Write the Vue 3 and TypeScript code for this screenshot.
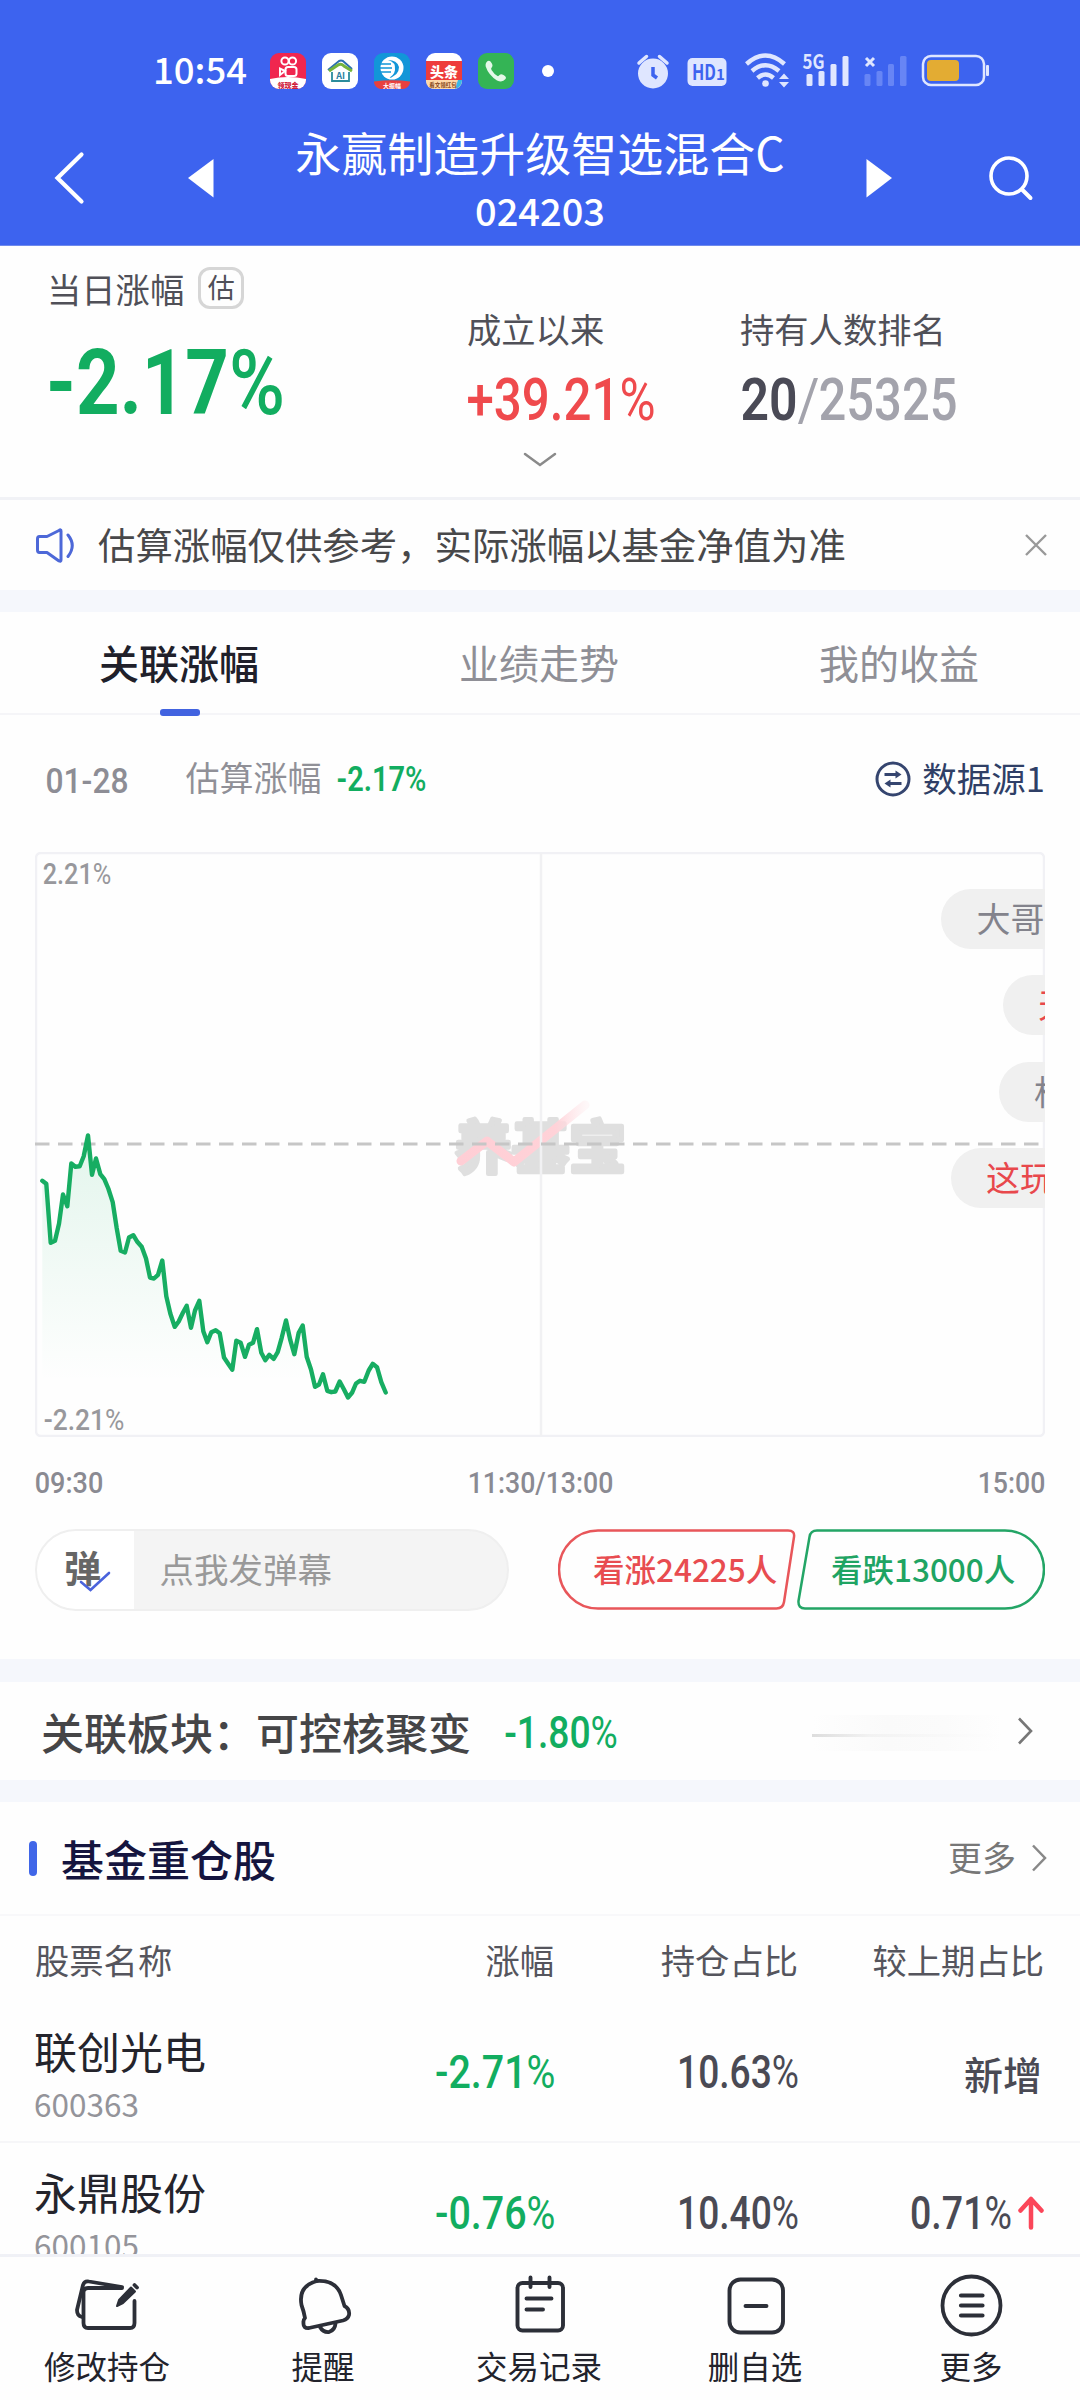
<script setup lang="ts">
import { h } from 'vue'

interface NumProps {
  text: string
  w: number
  cap: number
  weight?: number
}

// Condensed numeral: digits are fitted to a fixed width, the percent sign is lighter
const Num = (props: NumProps) => {
  const pad = props.cap * 0.06
  const weight = props.weight ?? 500
  const body = props.text.replace('%', '')
  const children = [h('tspan', body)]
  if (body !== props.text) {
    children.push(h('tspan', { 'font-weight': weight > 500 ? 500 : 400 }, '%'))
  }
  return h('svg', { class: 'num', width: props.w, height: props.cap }, [
    h(
      'text',
      {
        x: -pad,
        y: props.cap,
        'font-size': props.cap / 0.711,
        'font-weight': weight,
        textLength: props.w + pad * 2,
        lengthAdjust: 'spacingAndGlyphs',
      },
      children,
    ),
  ])
}
Num.props = ['text', 'w', 'cap', 'weight']

const series: [number, number][] = [
  [127, 304], [139, 313], [152, 490], [165, 484], [177, 433], [189, 345], [202, 380], [214, 252],
  [226, 262], [239, 260], [251, 230], [264, 168], [276, 286], [288, 237], [301, 284], [313, 299],
  [325, 327], [338, 368], [350, 446], [362, 514], [375, 519], [387, 474], [400, 467], [412, 487],
  [425, 502], [438, 537], [450, 594], [462, 597], [474, 586], [487, 543], [499, 650], [511, 702],
  [524, 742], [536, 726], [549, 699], [560, 679], [573, 745], [585, 693], [598, 664], [610, 755],
  [622, 788], [634, 758], [647, 752], [659, 761], [672, 834], [684, 852], [697, 871], [709, 784],
  [722, 790], [735, 832], [747, 796], [759, 790], [771, 749], [784, 820], [796, 842], [808, 826],
  [821, 838], [833, 818], [845, 775], [858, 723], [871, 782], [883, 824], [896, 760], [908, 738],
  [920, 832], [933, 870], [945, 922], [957, 915], [969, 884], [982, 934], [994, 938], [1006, 936],
  [1019, 906], [1032, 930], [1044, 954], [1056, 940], [1068, 912], [1080, 904], [1093, 907],
  [1106, 873], [1118, 853], [1131, 863], [1144, 908], [1157, 939],
]
const pts = series.map(([x, y]) => `${(x / 3 - 35).toFixed(1)},${(y / 3 + 227.5).toFixed(1)}`)
const linePoints = pts.join(' ')
const areaPath = `M${pts.join('L')}L350.7,541L7.3,541Z`

const danmu = [
  { text: '大哥别跑', x: 906, y: 36.5, red: false },
  { text: '天天跌', x: 967.5, y: 123, red: true },
  { text: '相信', x: 963.5, y: 209.5, red: false },
  { text: '这玩意', x: 915.5, y: 296, red: true },
]

const tabs = ['关联涨幅', '业绩走势', '我的收益']

const stocks = [
  { name: '联创光电', code: '600363', chg: '-2.71%', pct: '10.63%', diff: '' },
  { name: '永鼎股份', code: '600105', chg: '-0.76%', pct: '10.40%', diff: '0.71%' },
]
</script>

<template>
  <div class="page">
    <header class="top">
      <div class="status">
        <span class="clock">10:54</span>
        <div class="apps">
          <svg width="36" height="36" viewBox="0 0 36 36">
            <defs><clipPath id="k"><rect width="36" height="36" rx="9" /></clipPath></defs>
            <g clip-path="url(#k)">
              <rect width="36" height="36" fill="#f0264f" />
              <path d="M0 26Q18 22 36 26V36H0Z" fill="#fff" />
            </g>
            <g fill="none" stroke="#fff" stroke-width="2">
              <circle cx="15" cy="8" r="3.6" /><circle cx="22.500" cy="8" r="3.6" />
              <rect x="15.500" y="14" width="11" height="9" rx="2.500" /><path d="M15 18L10 15.500V22Z" />
            </g>
            <text x="18" y="34.500" text-anchor="middle" font-size="7" font-weight="900" fill="#d0203c">领现金</text>
          </svg>
          <svg width="36" height="36" viewBox="0 0 36 36">
            <rect width="36" height="36" rx="9" fill="#fff" />
            <path d="M6 17L17 8Q19 7 21 8L30 16" fill="none" stroke="#2c6fb0" stroke-width="2" />
            <path d="M7 18L16 12Q19 10 22 13L30 18" fill="none" stroke="#74b43c" stroke-width="3" />
            <path d="M10 19V28H27V19" fill="none" stroke="#2b8c9c" stroke-width="1.800" />
            <text x="18.500" y="26" text-anchor="middle" font-size="9" font-weight="700" fill="#2b80a0">AI</text>
          </svg>
          <svg width="36" height="36" viewBox="0 0 36 36">
            <rect width="36" height="36" rx="9" fill="#1296d8" />
            <circle cx="18" cy="15" r="11.500" fill="#fff" />
            <path d="M14 7Q22 9 21 17Q20 23 14 25Q25 23 25 14Q23 7 14 7Z" fill="#1296d8" />
            <path d="M5 11H17M5 15H18M5 19H17" stroke="#1296d8" stroke-width="1.500" />
            <path d="M0 28.500Q18 26 36 28.500V30Q34 36 28 36H8Q2 36 0 30Z" fill="#e8403f" />
            <text x="18" y="34.500" text-anchor="middle" font-size="6" font-weight="700" fill="#fff">大振幅</text>
          </svg>
          <svg width="36" height="36" viewBox="0 0 36 36">
            <rect width="36" height="36" rx="9" fill="#fff" />
            <rect y="8" width="36" height="19" fill="#ee3c3c" />
            <path d="M0 27H36Q36 36 27 36H9Q0 36 0 27Z" fill="#ffd8a8" />
            <path d="M29 36L32 27H36Q36 34 29 36Z" fill="#38b8e8" />
            <text x="18" y="23.500" text-anchor="middle" font-size="14" font-weight="900" fill="#fff">头条</text>
            <text x="17" y="34" text-anchor="middle" font-size="5.500" font-weight="700" fill="#8a4a20">看文领红包</text>
          </svg>
          <svg width="36" height="36" viewBox="0 0 36 36">
            <rect width="36" height="36" rx="9" fill="#34b455" />
            <path d="M8 10Q10 6.500 12.500 8.500Q15.500 12 14 14Q12.500 15.500 13.500 17Q16 21 19.500 23Q20.500 23.500 21.500 22Q23 20.500 25.500 22Q29 24 27.500 26Q24.500 30 19 27.500Q10.500 22 7.700 13.500Q7.300 11.500 8 10Z" fill="#e4f8e8" />
          </svg>
        </div>
        <i class="dot"></i>
        <svg class="sys" width="354" height="40" viewBox="636 51 354 40">
          <g fill="#dfe6ff">
            <circle cx="653" cy="73.500" r="15" />
            <path d="M639 63L646.500 56.500M667 63L659.500 56.500" stroke="#dfe6ff" stroke-width="3.500" stroke-linecap="round" />
            <path d="M653 67V75L657 78" fill="none" stroke="#3d63ef" stroke-width="3.500" />
            <rect x="687.500" y="58" width="39" height="28" rx="5" />
            <text x="692" y="80" font-size="21" font-weight="700" textLength="24" lengthAdjust="spacingAndGlyphs" fill="#3d63ef">HD</text>
            <text x="716" y="80" font-size="15" font-weight="700" fill="#3d63ef">1</text>
            <g fill="none" stroke="#dfe6ff" stroke-width="4.400">
              <path d="M746.500 64Q765.500 47 784.500 64" /><path d="M752 71Q765.500 59.500 779 71" /><path d="M757.500 78Q765.500 71 773.500 78" />
            </g>
            <circle cx="765.500" cy="83.500" r="3.300" />
            <path d="M779 79L784 73.500L789 79ZM779 82L784 87.500L789 82Z" />
            <text x="802.500" y="69" font-size="20" font-weight="700" textLength="22" lengthAdjust="spacingAndGlyphs">5G</text>
            <rect x="806.500" y="74" width="6" height="12" rx="1.500" /><rect x="818.500" y="71" width="6" height="15" rx="1.500" />
            <rect x="830.500" y="64" width="6" height="22" rx="1.500" /><rect x="842.500" y="56" width="6" height="30" rx="1.500" />
            <path d="M866 58L874 66M874 58L866 66" stroke="#dfe6ff" stroke-width="3" />
            <g fill="#6785f5">
              <rect x="864.500" y="74" width="6" height="12" rx="1.500" /><rect x="876.500" y="71" width="6" height="15" rx="1.500" />
              <rect x="888" y="64" width="6" height="22" rx="1.500" /><rect x="900" y="56" width="6.500" height="30" rx="1.500" />
            </g>
            <rect x="923" y="56" width="61" height="29" rx="8" fill="none" stroke="#dfe6ff" stroke-width="2.500" />
            <rect x="927" y="60" width="32" height="21" rx="4" fill="#e3ac33" />
            <rect x="986" y="65" width="3" height="11" rx="1" />
          </g>
        </svg>
      </div>
      <div class="nav">
        <svg width="230" height="60" viewBox="0 148 230 60">
          <path d="M81.500 154.500L57.500 178L81.500 201.500" fill="none" stroke="#fff" stroke-width="4.200" stroke-linecap="round" />
          <path d="M188 178L213.500 159V197.500Z" fill="#fff" />
        </svg>
        <div class="title">
          <div class="t1">永赢制造升级智选混合C</div>
          <div class="t2">024203</div>
        </div>
        <svg width="230" height="60" viewBox="850 148 230 60">
          <path d="M892 178L866.500 159V197.500Z" fill="#fff" />
          <circle cx="1009" cy="176" r="18" fill="none" stroke="#fff" stroke-width="3.600" />
          <path d="M1022 189.500L1030.500 198" stroke="#fff" stroke-width="4" stroke-linecap="round" />
        </svg>
      </div>
    </header>

    <section class="stats">
      <div class="stat day">
        <div class="lab">当日涨幅<span class="est">估</span></div>
        <Num class="green" text="-2.17%" :w="231" :cap="65" :weight="700" />
      </div>
      <div class="stat">
        <div class="lab">成立以来</div>
        <Num class="red since" text="+39.21%" :w="184" :cap="42" />
      </div>
      <div class="stat">
        <div class="lab">持有人数排名</div>
        <div class="rank">
          <Num text="20" :w="52" :cap="42" :weight="600" />
          <Num class="dim" text="/" :w="17" :cap="42" :weight="400" />
          <Num class="dim" text="25325" :w="134" :cap="42" />
        </div>
      </div>
      <svg class="expand" width="34" height="16" viewBox="0 0 34 16"><path d="M2 2L17 13L32 2" fill="none" stroke="#8a8a8a" stroke-width="2.500" stroke-linecap="round" /></svg>
    </section>

    <section class="notice">
      <svg width="42" height="38" viewBox="34 525 42 38" fill="none" stroke="#4d68d8" stroke-width="3" stroke-linecap="round" stroke-linejoin="round">
        <path d="M47 535.500H39.500Q37.500 535.500 37.500 538V549Q37.500 551.500 39.500 551.500H47L59 560Q61 561 61 559V530Q61 528 59 529.500Z" /><path d="M68 534Q76.500 544.500 68 555.500" />
      </svg>
      <span>估算涨幅仅供参考，实际涨幅以基金净值为准</span>
      <svg class="close" width="24" height="24" viewBox="0 0 24 24"><path d="M2 2L22 22M22 2L2 22" stroke="#999" stroke-width="2.400" /></svg>
    </section>
    <div class="gap first"></div>

    <nav class="tabs">
      <div v-for="(t, i) in tabs" :key="t" class="tab" :class="{ on: i === 0 }">{{ t }}</div>
    </nav>

    <section class="chart-card">
      <div class="info">
        <Num class="gray date" text="01-28" :w="80" :cap="24.500" />
        <span class="il">估算涨幅</span>
        <Num class="green" text="-2.17%" :w="87" :cap="24.500" :weight="600" />
        <div class="src">
          <svg width="38" height="38" viewBox="0 0 38 38" fill="none" stroke="#35456f" stroke-width="3">
            <circle cx="19" cy="19" r="16" /><path d="M10.500 14.500H22M27.500 23.500H16" />
            <path d="M21.500 10.500L27.500 14.500L21.500 18.500ZM16.500 19.500L10.500 23.500L16.500 27.500Z" fill="#35456f" stroke="none" />
          </svg>
          <span>数据源1</span>
        </div>
      </div>

      <div class="chart">
        <svg width="1010" height="585" viewBox="0 0 1010 585">
          <defs>
            <linearGradient id="area" x1="0" y1="290" x2="0" y2="530" gradientUnits="userSpaceOnUse">
              <stop offset="0" stop-color="#10b060" stop-opacity=".11" /><stop offset="1" stop-color="#10b060" stop-opacity="0" />
            </linearGradient>
            <linearGradient id="pink" x1="425" y1="0" x2="552" y2="0" gradientUnits="userSpaceOnUse">
              <stop offset="0" stop-color="#ffced5" /><stop offset=".75" stop-color="#ffd2d8" /><stop offset="1" stop-color="#ffe8eb" stop-opacity=".3" />
            </linearGradient>
          </defs>
          <text class="wm" x="420" y="316" textLength="171">养基宝</text>
          <path d="M426 309L452 289L479 310L550 253" fill="none" stroke="url(#pink)" stroke-width="9" stroke-linejoin="round" stroke-linecap="round" />
          <rect x="1" y="1" width="1008" height="583" rx="5" fill="none" stroke="#f1f1f5" stroke-width="2.500" />
          <path d="M506 1V584" stroke="#f1f1f3" stroke-width="2.500" />
          <path d="M0 292H1009" stroke="#c6c6c6" stroke-width="2.800" stroke-dasharray="14.500 8.500" />
          <path :d="areaPath" fill="url(#area)" />
          <polyline :points="linePoints" fill="none" stroke="#17ad62" stroke-width="4.400" stroke-linejoin="round" stroke-linecap="round" />
        </svg>
        <Num class="axis hi" text="2.21%" :w="66" :cap="21.500" />
        <Num class="axis lo" text="-2.21%" :w="78" :cap="21.500" />
        <div v-for="d in danmu" :key="d.text" class="danmu" :class="{ hot: d.red }" :style="{ left: d.x + 'px', top: d.y + 'px' }">{{ d.text }}</div>
      </div>

      <div class="times">
        <Num text="09:30" :w="66" :cap="21.500" />
        <Num text="11:30/13:00" :w="143" :cap="21.500" />
        <Num text="15:00" :w="65" :cap="21.500" />
      </div>

      <div class="actions">
        <div class="send">
          <div class="dan">弹
            <svg class="tick" width="32" height="22" viewBox="0 0 32 22"><path d="M2 11L11.500 19L30 2" fill="none" stroke="#4a63dc" stroke-width="2.600" stroke-linecap="round" /></svg>
          </div>
          <div class="ph">点我发弹幕</div>
        </div>
        <div class="votes">
          <div class="vote up">
            <svg width="238" height="81" viewBox="0 0 238 81"><path d="M40 1.500H230Q237 1.500 236 8L226 73Q225 79.500 218.500 79.500H40A39 39 0 0 1 40 1.500Z" fill="none" stroke="#e8565a" stroke-width="2.500" /></svg>
            <span>看涨24225人</span>
          </div>
          <div class="vote down">
            <svg width="248" height="81" viewBox="0 0 248 81"><path d="M208 1.500H20Q13.500 1.500 12.500 8L1.500 72Q1 79.500 8 79.500H208A39 39 0 0 0 208 1.500Z" fill="none" stroke="#23a566" stroke-width="2.500" /></svg>
            <span>看跌13000人</span>
          </div>
        </div>
      </div>
    </section>
    <div class="gap"></div>

    <section class="related">
      <span>关联板块：可控核聚变</span>
      <Num class="green" text="-1.80%" :w="110" :cap="31" />
      <i class="trend"></i>
      <svg width="16" height="28" viewBox="0 0 16 28"><path d="M2 1.500L14 14L2 26.500" fill="none" stroke="#777" stroke-width="2.600" /></svg>
    </section>
    <div class="gap thin"></div>

    <section class="hold">
      <div class="hh">
        <i class="bar"></i>
        <h2>基金重仓股</h2>
        <span class="more">更多</span>
        <svg width="16" height="28" viewBox="0 0 16 28"><path d="M2 1.500L14 14L2 26.500" fill="none" stroke="#888" stroke-width="2.500" /></svg>
      </div>
      <div class="row th">
        <div>股票名称</div><div>涨幅</div><div>持仓占比</div><div>较上期占比</div>
      </div>
      <div v-for="s in stocks" :key="s.code" class="row tr">
        <div class="nm"><b>{{ s.name }}</b><span>{{ s.code }}</span></div>
        <div><Num class="green" :text="s.chg" :w="116.500" :cap="33" /></div>
        <div><Num :text="s.pct" :w="118" :cap="33" /></div>
        <div v-if="s.diff" class="diff">
          <Num :text="s.diff" :w="98" :cap="33" />
          <svg width="26" height="34" viewBox="0 0 26 34"><path d="M13 31.500V3M2.500 14.500L13 3L23.500 14.500" fill="none" stroke="#fb4659" stroke-width="4.500" stroke-linecap="round" stroke-linejoin="round" /></svg>
        </div>
        <div v-else class="new">新增</div>
      </div>
    </section>

    <footer class="bottom">
      <div class="item">
        <svg width="70" height="64" viewBox="73 2272 70 64" fill="none" stroke="#2c2f38" stroke-width="3.800" stroke-linecap="round" stroke-linejoin="round">
          <path d="M122 2287H88Q83.500 2287 83.500 2291.500V2322Q83.500 2327 88 2327H130Q134.500 2327 134.500 2322V2300" />
          <path d="M82 2316Q77 2315 77 2309L83 2284Q84.500 2279.500 89 2280.500L122 2286" />
          <path d="M117 2305L119 2299L131 2286.500L135 2290.500L123 2302Z" fill="#2c2f38" stroke-width="2" /><path d="M134.500 2284L137 2286.500" />
        </svg>
        <span>修改持仓</span>
      </div>
      <div class="item">
        <svg width="70" height="64" viewBox="289 2272 70 64" fill="none" stroke="#2c2f38" stroke-width="3.800" stroke-linecap="round" stroke-linejoin="round">
          <path d="M317 2280Q336 2279 341 2294L344.500 2305Q350 2308 349 2314Q348 2318 343 2319.500L309 2327Q303 2327.500 303.500 2322Q303 2319 305 2317Q304 2311 301.500 2304Q298 2285 317 2280ZM316 2280V2278.500" />
          <path d="M320 2326Q323 2331.500 329 2331Q335 2329 335.500 2322.500" />
        </svg>
        <span>提醒</span>
      </div>
      <div class="item">
        <svg width="70" height="64" viewBox="505 2272 70 64" fill="none" stroke="#2c2f38" stroke-width="3.900" stroke-linecap="round">
          <rect x="517.500" y="2282" width="45.500" height="47.500" rx="5" /><path d="M530.500 2276.500V2286M549.500 2276.500V2286M526.500 2297.500H551.500M526.500 2308.500H543" />
        </svg>
        <span>交易记录</span>
      </div>
      <div class="item">
        <svg width="70" height="64" viewBox="721 2272 70 64" fill="none" stroke="#2c2f38" stroke-width="3.900" stroke-linecap="round">
          <rect x="729.500" y="2278.500" width="53.500" height="53" rx="11" /><path d="M745.500 2305H766.500" />
        </svg>
        <span>删自选</span>
      </div>
      <div class="item">
        <svg width="70" height="64" viewBox="937 2272 70 64" fill="none" stroke="#2c2f38" stroke-width="3.800" stroke-linecap="round">
          <circle cx="971.500" cy="2304.500" r="29" /><path d="M961 2294.500H982.500M961 2304.500H982.500M961 2314.500H982.500" stroke-width="4.200" />
        </svg>
        <span>更多</span>
      </div>
    </footer>
  </div>
</template>

<style>
body { margin: 0; background: #fefefe; }
.num { overflow: visible; display: block; flex: none; fill: currentColor; font-family: Roboto, "Liberation Sans", sans-serif; }
</style>

<style scoped>
.page { width: 1080px; height: 2400px; overflow: hidden; background: #fefefe; color: #4a4a54; font-family: "Noto Sans CJK SC", sans-serif; display: flex; flex-direction: column; }
.page > * { flex: none; box-sizing: border-box; }
svg { display: block; flex: none; }
.green { color: #12ad60; }
.red { color: #ef4a4d; }
.gray { color: #8d8d95; }

.top { height: 246px; background: #3d63ef; color: #fff; border-bottom: 1px solid #6f8aec; }
.status { height: 122px; padding-top: 20px; box-sizing: border-box; display: flex; align-items: center; }
.clock { margin-left: 153px; width: 117px; font-size: 36.500px; line-height: 40px; font-weight: 500; margin-top: -5px; }
.apps { display: flex; gap: 16px; }
.dot { width: 12px; height: 12px; border-radius: 50%; background: #fff; margin-left: 28px; }
.sys { margin-left: 82px; }
.nav { display: flex; height: 112px; justify-content: space-between; align-items: center; }
.title { text-align: center; white-space: nowrap; }
.t1 { font-size: 46px; line-height: 60px; margin-top: -1px; }
.t2 { font-size: 38px; line-height: 52px; font-weight: 500; margin-top: 3px; margin-bottom: -2px; }

.stats { height: 254px; border-bottom: 3px solid #f1f2f6; display: flex; position: relative; }
.stat { width: 273px; padding-top: 58px; white-space: nowrap; }
.day { width: 417px; padding: 18px 0 0 50px; }
.lab { font-size: 34.300px; line-height: 48px; color: #505058; display: flex; align-items: center; margin-bottom: 26px; }
.day .lab { margin: 0 0 37px -3px; }
.est { font-size: 27px; line-height: 34px; height: 36px; width: 40px; text-align: center; border: 3px solid #d6d6d6; border-radius: 12px; margin-left: 14px; }
.since { margin-left: 2px; }
.rank { display: flex; gap: 4.500px; color: #4a4a56; margin-left: 3px; }
.dim { color: #a3a3ac; }
.expand { position: absolute; left: 523px; bottom: 29px; }

.notice { height: 90px; padding: 0 32px 0 34px; display: flex; align-items: center; font-size: 37.400px; color: #48484a; white-space: nowrap; }
.notice span { margin: -2px auto 0 22px; }
.notice svg { margin-top: -1px; }
.gap { height: 23px; background: #f5f7fc; }
.first { height: 22px; }
.tabs { height: 103px; display: flex; border-bottom: 2px solid #f5f5f8; }
.tab { flex: 1; text-align: center; font-size: 40px; line-height: 101px; color: #8f8f96; position: relative; left: -1px; }
.on { color: #20202a; font-weight: 500; }
.on::after { content: ""; position: absolute; left: 161px; bottom: -3px; width: 40px; height: 7px; border-radius: 3px; background: #4263e0; }

.chart-card { height: 944px; padding: 0 35px; }
.info { height: 137px; display: flex; align-items: center; padding-left: 11.500px; box-sizing: border-box; padding-bottom: 10px; }
.date { margin-top: 4px; }
.il { font-size: 34px; color: #909097; margin: -4px 16px 0 59px; }
.src { display: flex; align-items: center; margin-left: auto; font-size: 34.500px; color: #2f3f66; gap: 10px; }
.src span { margin-top: -4px; }
.chart { position: relative; height: 585px; width: 1010px; overflow: hidden; }
.wm { font-size: 57px; font-weight: 700; fill: #dfdfdf; stroke: #dfdfdf; stroke-width: 4.500; stroke-linejoin: round; }
.axis { position: absolute; left: 9px; color: #98989c; }
.hi { top: 9.500px; }
.lo { bottom: 8px; left: 10px; }
.danmu { position: absolute; height: 60px; line-height: 57px; padding: 0 35.500px; border-radius: 30px; background: #f0f0f0; color: #83838c; font-size: 34px; white-space: nowrap; }
.hot { color: #e8484c; }
.times { display: flex; justify-content: space-between; padding: 33.500px 1px 36.500px 0.500px; color: #8a8a92; }
.actions { display: flex; justify-content: space-between; }
.send { width: 474px; height: 82px; box-sizing: border-box; border: 2px solid #efefef; border-radius: 41px; background: #f4f4f4; display: flex; overflow: hidden; }
.dan { width: 97px; background: #fff; font-size: 37px; font-weight: 700; color: #666; line-height: 73px; padding-left: 27px; box-sizing: border-box; position: relative; }
.tick { position: absolute; left: 42px; top: 40px; }
.ph { font-size: 34.500px; color: #999; line-height: 75px; padding-left: 25.500px; }
.votes { display: flex; gap: 1px; width: 487px; }
.vote { position: relative; font-size: 31.500px; font-weight: 500; }
.vote span { position: absolute; top: 16.500px; line-height: 46px; white-space: nowrap; }
.up { color: #e84c50; }
.up span { left: 35px; }
.down { color: #1fa463; }
.down span { left: 34px; }

.related { height: 98px; display: flex; align-items: center; padding: 0 47px 0 41px; font-size: 43px; font-weight: 500; color: #454547; }
.related span { margin: -1px 35px 0 0; }
.related .num { margin-top: 2px; }
.trend { width: 190px; height: 36px; margin: 4px 15px 0 auto; background: linear-gradient(90deg, #ddd, #f2f2f2 30%, #fefefe) 0 19px / 100% 3px no-repeat, linear-gradient(90deg, #fefefe, #fafafa 40%, #fbfbfb 70%, #fefefe); }
.thin { height: 22px; }

.hold { height: 452px; overflow: hidden; }
.hh { height: 114px; border-bottom: 2px solid #f8f8fa; display: flex; align-items: center; padding: 0 33px 0 29px; box-sizing: border-box; }
.bar { width: 8px; height: 35px; border-radius: 4px; background: #4066e8; }
h2 { margin: 0 auto 0 24px; font-size: 43px; line-height: 60px; font-weight: 500; color: #15153f; }
.more { font-size: 34px; color: #777; margin-right: 15px; margin-top: -3px; }
.row { display: grid; grid-template-columns: 319px 200px 244px 246px; padding-left: 35px; white-space: nowrap; }
.row > div { display: flex; justify-content: flex-end; align-items: center; }
.row > div:first-child { justify-content: flex-start; }
.th { height: 86px; font-size: 34.300px; color: #55555d; }
.tr { height: 141px; box-sizing: border-box; border-bottom: 2px solid #f6f6f8; }
.tr > div { padding-right: 1px; }
.row > .nm { flex-direction: column; align-items: flex-start; justify-content: flex-start; padding-top: 20px; box-sizing: border-box; }
.nm b { font-size: 43px; line-height: 56px; font-weight: 400; color: #24242c; margin-left: -1px; }
.nm span { font-size: 31.500px; line-height: 46px; margin-top: 2px; color: #94949a; margin-left: -1px; }
.diff { gap: 8px; }
.row > .diff { padding-right: 0; }
.new { font-size: 39px; font-weight: 500; }
.row > .new { padding: 2px 2px 0 0; }

.bottom { height: 146px; border-top: 3px solid #f0f1f6; display: flex; background: #fefefe; }
.item { flex: 1; display: flex; flex-direction: column; align-items: center; padding-top: 16px; font-size: 31.500px; line-height: 46px; color: #22232c; }
.item span { margin: 5px 2px 0 0; }
</style>
